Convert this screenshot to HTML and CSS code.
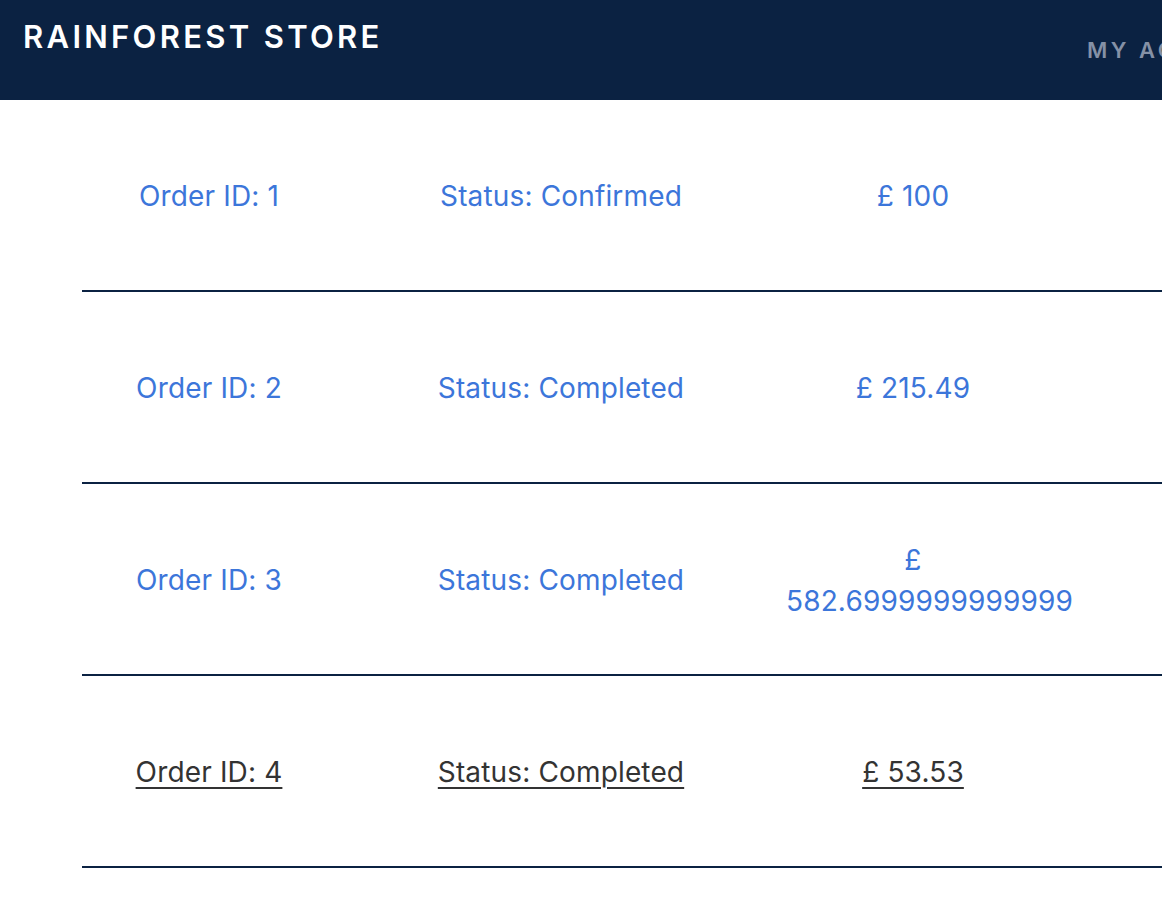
FILE: index.html
```html
<!DOCTYPE html>
<html>
<head>
<meta charset="utf-8">
<link rel="stylesheet" href="styles.css">
</head>
<body>
<header class="topbar">
  <div class="brand">RAINFOREST STORE</div>
  <nav class="nav"><a class="nav-link" href="#">MY ACCOUNT</a></nav>
</header>
<main class="orders">
  <a class="order" href="#">
    <span class="cell">Order ID: 1</span>
    <span class="cell">Status: Confirmed</span>
    <span class="cell">£ 100</span>
  </a>
  <a class="order" href="#">
    <span class="cell">Order ID: 2</span>
    <span class="cell">Status: Completed</span>
    <span class="cell">£ 215.49</span>
  </a>
  <a class="order" href="#">
    <span class="cell">Order ID: 3</span>
    <span class="cell">Status: Completed</span>
    <span class="cell">£ 582.6999999999999</span>
  </a>
  <a class="order order-hover" href="#">
    <span class="cell">Order ID: 4</span>
    <span class="cell">Status: Completed</span>
    <span class="cell">£ 53.53</span>
  </a>
</main>
</body>
</html>
```
FILE: styles.css
```css
html, body {
  margin: 0;
  padding: 0;
  background: #ffffff;
  overflow: hidden;
}
body {
  font-family: Inter, "Noto Sans", sans-serif;
  width: 1162px;
  height: 918px;
}
.topbar {
  background: #0b2242;
  height: 100px;
  display: flex;
  justify-content: space-between;
}
.brand {
  color: #ffffff;
  font-weight: 600;
  font-size: 31px;
  letter-spacing: 3.3px;
  padding: 18px 0 0 23px;
}
.nav {
  padding: 37px 0 0 0;
  width: 75px;
  white-space: nowrap;
}
.nav-link {
  color: #8591a6;
  text-decoration: none;
  font-weight: 600;
  font-size: 22px;
  letter-spacing: 3.5px;
}
.orders {
  margin-left: 82px;
  width: 1300px;
}
.order {
  display: grid;
  grid-template-columns: repeat(3, 254px);
  column-gap: 98px;
  align-items: center;
  height: 187px;
  padding-top: 3px;
  border-bottom: 2px solid #0b2242;
  color: #3c76da;
  text-decoration: none;
  font-size: 28px;
  line-height: 41px;
  letter-spacing: 0.15px;
}
.cell {
  text-align: center;
}
.order-hover {
  color: #333333;
}
.order-hover .cell {
  text-decoration: underline;
  text-underline-offset: 5px;
  text-decoration-thickness: 2px;
}
```
